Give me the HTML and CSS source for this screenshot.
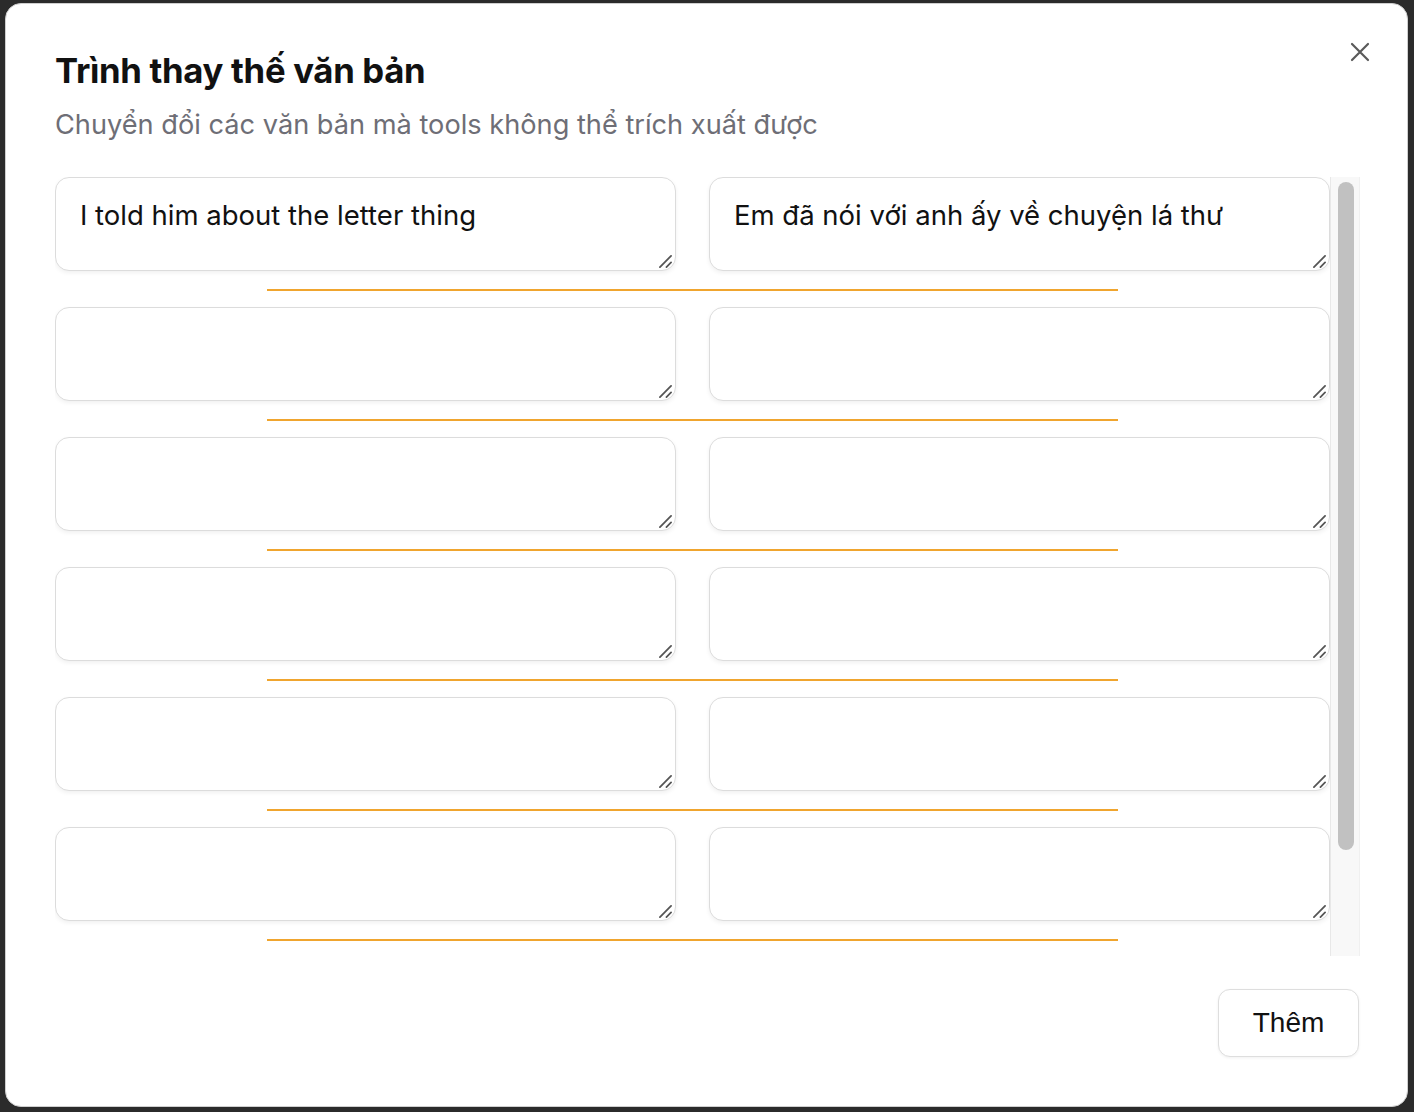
FILE: index.html
```html
<!DOCTYPE html>
<html lang="vi">
<head>
<meta charset="utf-8">
<title>Trình thay thế văn bản</title>
<link rel="stylesheet" href="styles.css">
</head>
<body>
<div class="dialog">
  <button class="close" aria-label="Đóng">
    <svg viewBox="0 0 20 20" width="20" height="20"><path d="M2 2 L18 18 M18 2 L2 18" stroke="#5a5a5a" stroke-width="2.2" stroke-linecap="round" fill="none"/></svg>
  </button>
  <h1 class="title">Trình thay thế văn bản</h1>
  <p class="subtitle">Chuyển đổi các văn bản mà tools không thể trích xuất được</p>
  <div class="scroll-wrap">
    <div class="list">
      <div class="row">
        <div class="pair">
          <div class="cell"><textarea class="field">I told him about the letter thing</textarea><svg class="grip" viewBox="0 0 14 14"><path d="M1 13 L13 1 M8 13 L13 8"/></svg></div>
          <div class="cell"><textarea class="field">Em đã nói với anh ấy về chuyện lá thư</textarea><svg class="grip" viewBox="0 0 14 14"><path d="M1 13 L13 1 M8 13 L13 8"/></svg></div>
        </div>
        <div class="divider"></div>
      </div>
      <div class="row">
        <div class="pair">
          <div class="cell"><textarea class="field"></textarea><svg class="grip" viewBox="0 0 14 14"><path d="M1 13 L13 1 M8 13 L13 8"/></svg></div>
          <div class="cell"><textarea class="field"></textarea><svg class="grip" viewBox="0 0 14 14"><path d="M1 13 L13 1 M8 13 L13 8"/></svg></div>
        </div>
        <div class="divider"></div>
      </div>
      <div class="row">
        <div class="pair">
          <div class="cell"><textarea class="field"></textarea><svg class="grip" viewBox="0 0 14 14"><path d="M1 13 L13 1 M8 13 L13 8"/></svg></div>
          <div class="cell"><textarea class="field"></textarea><svg class="grip" viewBox="0 0 14 14"><path d="M1 13 L13 1 M8 13 L13 8"/></svg></div>
        </div>
        <div class="divider"></div>
      </div>
      <div class="row">
        <div class="pair">
          <div class="cell"><textarea class="field"></textarea><svg class="grip" viewBox="0 0 14 14"><path d="M1 13 L13 1 M8 13 L13 8"/></svg></div>
          <div class="cell"><textarea class="field"></textarea><svg class="grip" viewBox="0 0 14 14"><path d="M1 13 L13 1 M8 13 L13 8"/></svg></div>
        </div>
        <div class="divider"></div>
      </div>
      <div class="row">
        <div class="pair">
          <div class="cell"><textarea class="field"></textarea><svg class="grip" viewBox="0 0 14 14"><path d="M1 13 L13 1 M8 13 L13 8"/></svg></div>
          <div class="cell"><textarea class="field"></textarea><svg class="grip" viewBox="0 0 14 14"><path d="M1 13 L13 1 M8 13 L13 8"/></svg></div>
        </div>
        <div class="divider"></div>
      </div>
      <div class="row">
        <div class="pair">
          <div class="cell"><textarea class="field"></textarea><svg class="grip" viewBox="0 0 14 14"><path d="M1 13 L13 1 M8 13 L13 8"/></svg></div>
          <div class="cell"><textarea class="field"></textarea><svg class="grip" viewBox="0 0 14 14"><path d="M1 13 L13 1 M8 13 L13 8"/></svg></div>
        </div>
        <div class="divider"></div>
      </div>
      <div class="row">
        <div class="pair">
          <div class="cell"><textarea class="field"></textarea><svg class="grip" viewBox="0 0 14 14"><path d="M1 13 L13 1 M8 13 L13 8"/></svg></div>
          <div class="cell"><textarea class="field"></textarea><svg class="grip" viewBox="0 0 14 14"><path d="M1 13 L13 1 M8 13 L13 8"/></svg></div>
        </div>
        <div class="divider"></div>
      </div>
    </div>
    <div class="scrollbar"><div class="thumb"></div></div>
  </div>
  <div class="footer">
    <button class="add">Thêm</button>
  </div>
</div>
</body>
</html>
```
FILE: styles.css
```css
html, body {
  margin: 0;
  background: #2b2b2b;
}
body {
  box-sizing: border-box;
  height: 1112px;
  padding: 3px 6px 5px 5px;
  font-family: "Inter", "Noto Sans", sans-serif;
}
.dialog {
  position: relative;
  box-sizing: border-box;
  height: 100%;
  background: #fff;
  border: 1px solid #cfcfcf;
  border-radius: 16px;
  padding: 42px 47px 49px 49px;
  display: flex;
  flex-direction: column;
}
.close {
  position: absolute;
  top: 38px;
  right: 37px;
  width: 20px;
  height: 20px;
  padding: 0;
  border: 0;
  background: none;
  cursor: pointer;
}
.close svg { display: block; }
.title {
  margin: 0;
  font-size: 34.7px;
  line-height: 48px;
  font-weight: 700;
  color: #111;
  letter-spacing: -0.3px;
}
.subtitle {
  margin: 13px 0 0;
  font-size: 27.2px;
  line-height: 36px;
  color: #6e6e76;
  font-weight: 400;
}
.scroll-wrap {
  margin-top: 34px;
  height: 779px;
  display: flex;
}
.list {
  flex: 1;
  min-width: 0;
  overflow: hidden;
}
.scrollbar {
  width: 30px;
  flex: none;
  box-sizing: border-box;
  background: #f8f8f8;
  border-left: 1px solid #e8e8e8;
  border-right: 1px solid #f0f0f0;
  padding: 5px 5px 0 7px;
}
.thumb {
  height: 668px;
  background: #c1c1c1;
  border-radius: 8px;
}
.pair {
  display: grid;
  grid-template-columns: 1fr 1fr;
  column-gap: 33px;
}
.cell {
  position: relative;
}
.field {
  box-sizing: border-box;
  width: 100%;
  height: 94px;
  margin: 0;
  border: 1px solid #dcdcdc;
  border-radius: 14px;
  box-shadow: 0 2px 4px rgba(0, 0, 0, 0.06);
  padding: 19px 24px 18px;
  font-family: "Inter", "Noto Sans", sans-serif;
  font-size: 27.5px;
  line-height: 36px;
  color: #111;
  background: #fff;
  outline: none;
  resize: none;
  display: block;
}
.grip {
  position: absolute;
  right: 4px;
  bottom: 3px;
  width: 13px;
  height: 13px;
  fill: none;
  stroke: #555;
  stroke-width: 1.9;
  stroke-linecap: round;
  pointer-events: none;
}
.divider {
  width: 66.67%;
  height: 2px;
  margin: 18px auto 16px;
  background: #f0a52e;
}
.row:last-child .divider { margin-bottom: 0; }
.footer {
  margin-top: auto;
  display: flex;
  justify-content: flex-end;
  padding-right: 1px;
}
.add {
  width: 141px;
  height: 68px;
  border: 1px solid #dedede;
  border-radius: 12px;
  background: #fff;
  box-shadow: 0 1px 3px rgba(0, 0, 0, 0.06);
  font-family: "Liberation Sans", Arial, sans-serif;
  font-size: 28px;
  font-weight: 500;
  color: #111;
  cursor: pointer;
}
```
